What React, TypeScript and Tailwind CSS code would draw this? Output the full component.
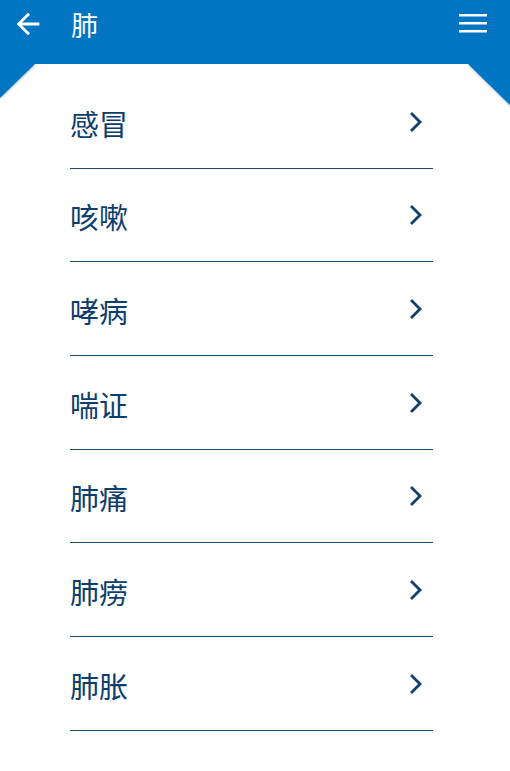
import React from "react";

const items = ["感冒", "咳嗽", "哮病", "喘证", "肺痛", "肺痨", "肺胀"];

const font = { fontFamily: '"Noto Sans CJK SC", "Noto Sans", sans-serif' };

const App: React.FC = () => {
  return (
    <div className="relative min-h-[771px] w-[510px] bg-white" style={font}>
      {/* Top bar */}
      <div className="flex h-16 items-start bg-[#0174c2] px-[11px]">
        <svg width="34" height="34" viewBox="0 0 24 24" className="mt-[7px]">
          <path
            d="M20 11H7.83l5.59-5.59L12 4l-8 8 8 8 1.41-1.41L7.83 13H20v-2z"
            fill="#fff"
          />
        </svg>
        <span className="ml-[26px] mt-[11px] text-[27px] leading-none text-white">肺</span>
        <svg width="28" height="20" viewBox="0 0 28 20" className="ml-auto mr-[12px] mt-[14px]">
          <rect x="0" y="0" width="28" height="2.5" fill="#fff" />
          <rect x="0" y="8" width="28" height="2.5" fill="#fff" />
          <rect x="0" y="16" width="28" height="2.5" fill="#fff" />
        </svg>
      </div>

      {/* Corner wedges of the header */}
      <svg
        className="pointer-events-none absolute left-0 top-16"
        width="510"
        height="44"
        viewBox="0 0 510 44"
      >
        <defs>
          <filter id="sh" x="-20%" y="-20%" width="140%" height="140%">
            <feDropShadow dx="0" dy="1" stdDeviation="1" floodColor="#003c6a" floodOpacity="0.35" />
          </filter>
        </defs>
        <polygon points="0,0 35,0 0,34" fill="#0174c2" filter="url(#sh)" />
        <polygon points="468,0 510,0 510,41" fill="#0174c2" filter="url(#sh)" />
      </svg>

      {/* List */}
      <div className="ml-[70px] mt-[11px] w-[363px]">
        {items.map((item) => (
          <div
            key={item}
            className="flex h-[93.67px] items-center justify-between border-b-[1.5px] border-[#1b4a75] pt-[6px]"
          >
            <span className="mt-[-2px] text-[29px] leading-none text-[#0d3d6c]">{item}</span>
            <svg width="14" height="20" viewBox="0 0 14 20" className="mr-[10px] mt-[-5px]">
              <path
                d="M3 2 L11 10 L3 18"
                fill="none"
                stroke="#0f3f6e"
                strokeWidth="2.8"
                strokeLinecap="square"
              />
            </svg>
          </div>
        ))}
      </div>
    </div>
  );
};

export default App;
